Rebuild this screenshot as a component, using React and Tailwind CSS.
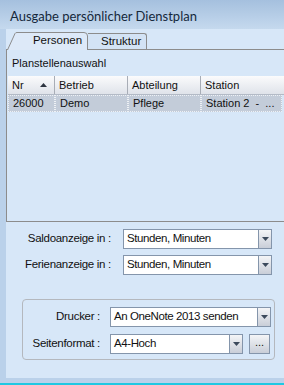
import React from "react";

const COLS = [
  { label: "Nr", w: "w-[47px]", value: "26000", sort: true },
  { label: "Betrieb", w: "w-[73px]", value: "Demo" },
  { label: "Abteilung", w: "w-[73px]", value: "Pflege" },
  { label: "Station", w: "w-[81px]", value: "Station 2  -  ..." },
];

function Arrow() {
  return (
    <svg width="7" height="4" viewBox="0 0 7 4">
      <path d="M0 0h7L3.5 4z" fill="#3c4a5c" />
    </svg>
  );
}

function Combo({ value, w }) {
  return (
    <div className={`${w} h-[20px] flex bg-white border border-[#8495ab]`}>
      <div className="flex-1 flex items-center pl-[3px] text-[11.5px] tracking-[-0.4px] text-[#111] whitespace-nowrap overflow-hidden">
        {value}
      </div>
      <div className="w-[13px] flex items-center justify-center border-l border-[#8495ab] bg-gradient-to-b from-[#f4f5f7] to-[#c9ced8]">
        <Arrow />
      </div>
    </div>
  );
}

export default function App() {
  return (
    <div className="w-[284px] h-[385px] flex flex-col bg-[#bad1ea] font-['Liberation_Sans',Arial,sans-serif] text-[#111] overflow-hidden">
      {/* title */}
      <div className="h-[29px] shrink-0 flex items-center pl-[10px] pt-[5px] bg-gradient-to-b from-[#a5c0de] to-[#c5d9ee] font-['Lato',sans-serif] text-[13px] text-[#15283b]">
        Ausgabe persönlicher Dienstplan
      </div>

      <div className="flex-1 flex">
        <div className="w-[6px] shrink-0" />
        <div className="flex-1 flex flex-col bg-[#d7e7f8]">
          {/* tabs */}
          <div className="h-[20px] shrink-0 flex items-end text-[11.5px]">
            <div className="relative ml-[1px] w-[81px] h-[17px] flex items-center justify-center pl-[20px] pt-[1px]">
              <svg className="absolute left-0 top-0" width="81" height="18" viewBox="0 0 81 18">
                <path d="M0.5 18 L8 1.5 Q8.5 0.5 10 0.5 H77 Q80.5 0.5 80.5 4 V18" fill="#dde9f8" stroke="#8c8c8c" />
              </svg>
              <span className="relative">Personen</span>
            </div>
            <div className="w-[59px] h-[16px] flex items-center pl-[13px] border-t border-r border-[#8c8c8c] rounded-tr-[3px] bg-[#d3e3f5]">
              Struktur
            </div>
          </div>

          {/* tab panel */}
          <div className="h-[173px] shrink-0 flex flex-col border-l border-t border-b border-[#8c8c8c]">
            <div className="h-[26px] flex items-center pl-[5px] text-[11px]">Planstellenauswahl</div>
            <div className="ml-[1px] flex h-[19px] bg-gradient-to-b from-[#fbfbfc] to-[#dfe3ea] border-b border-[#b3bac6] text-[11px]">
              {COLS.map((c, i) => (
                <div
                  key={c.label}
                  className={`${c.w} flex items-center pl-[4px] ${i < COLS.length - 1 ? "border-r border-[#a8adb6]" : ""} relative`}
                >
                  {c.label}
                  {c.sort && (
                    <svg className="absolute right-[7px] top-[7px]" width="7" height="4" viewBox="0 0 7 4">
                      <path d="M0 4h7L3.5 0z" fill="#2d3440" />
                    </svg>
                  )}
                </div>
              ))}
            </div>
            <div className="ml-[1px] flex h-[17px] text-[11px]">
              {COLS.map((c) => (
                <div
                  key={c.label}
                  className={`${c.w} flex items-center pl-[4px] bg-[#c3ccd9] border border-dotted border-[#eef1f5] whitespace-pre`}
                >
                  {c.value}
                </div>
              ))}
            </div>
          </div>

          {/* balance settings */}
          <div className="mt-[7px] flex items-center text-[11.5px] tracking-[-0.3px]">
            <div className="w-[105px] text-right">Saldoanzeige in :</div>
            <div className="ml-[12px]">
              <Combo value="Stunden, Minuten" w="w-[149px]" />
            </div>
          </div>
          <div className="mt-[6px] flex items-center text-[11.5px] tracking-[-0.3px]">
            <div className="w-[105px] text-right">Ferienanzeige in :</div>
            <div className="ml-[12px]">
              <Combo value="Stunden, Minuten" w="w-[149px]" />
            </div>
          </div>

          {/* printer group */}
          <div className="mt-[24px] ml-[16px] w-[253px] h-[61px] border border-[#b4b8be] rounded-[4px] flex flex-col pt-[7px] text-[11.5px] tracking-[-0.3px]">
            <div className="flex items-center">
              <div className="w-[77px] text-right">Drucker :</div>
              <div className="ml-[10px]">
                <Combo value="An OneNote 2013 senden" w="w-[161px]" />
              </div>
            </div>
            <div className="mt-[7px] flex items-center">
              <div className="w-[77px] text-right">Seitenformat :</div>
              <div className="ml-[10px] flex gap-[6px]">
                <Combo value="A4-Hoch" w="w-[133px]" />
                <div className="w-[21px] h-[20px] flex items-center justify-center border border-[#8495ab] bg-gradient-to-b from-[#f4f5f7] to-[#c9ced8] text-[11px] tracking-normal leading-none pb-[3px]">
                  ...
                </div>
              </div>
            </div>
          </div>
        </div>
      </div>

      <div className="h-[5px] shrink-0" />
      <div className="h-[2px] shrink-0 bg-[#1ec8e2]" />
    </div>
  );
}
